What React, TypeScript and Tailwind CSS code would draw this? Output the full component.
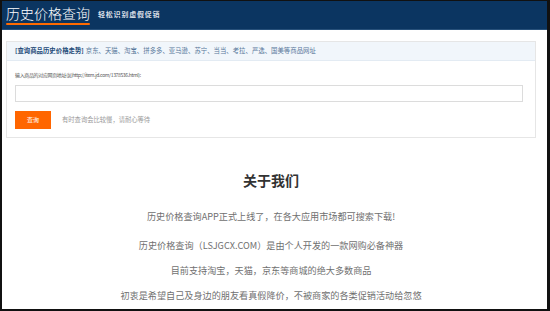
export default function App() {
  const shops = '京东、天猫、淘宝、拼多多、亚马逊、苏宁、当当、考拉、严选、国美等商品网址';
  const lines = [
    '历史价格查询APP正式上线了，在各大应用市场都可搜索下载!',
    '历史价格查询（LSJGCX.COM）是由个人开发的一款网购必备神器',
    '目前支持淘宝，天猫，京东等商城的绝大多数商品',
    '初衷是希望自己及身边的朋友看真假降价，不被商家的各类促销活动给忽悠',
  ];

  return (
    <div className="w-[550px] h-[311px] bg-[#111] pt-px pl-[2px] pr-[3px] pb-[2px] overflow-hidden">
      <div
        className="h-full bg-white flex flex-col overflow-hidden"
        style={{ fontFamily: '"Noto Sans CJK SC", "Noto Sans", sans-serif' }}
      >
        {/* Header */}
        <header className="h-[29px] shrink-0 bg-[#0b3561] border-b border-[#27507a] flex items-start pl-[4px]">
          <div className="pt-[4px] flex flex-col">
            <span className="text-[14px] leading-[17px] text-white font-light">历史价格查询</span>
            <div className="h-[2px] w-[84px] bg-[#ff6a00] mt-[1px] rounded-full" />
          </div>
          <span className="ml-[8px] mt-[9px] text-[7px] leading-[9px] font-bold text-[#d8dee6] tracking-[0.8px]">
            轻松识别虚假促销
          </span>
        </header>

        {/* Query card */}
        <section className="mt-[11px] ml-[4px] w-[530px] border border-[#e6e6e6] bg-white">
          <div className="h-[19px] bg-[#f1f6fb] border-b border-[#e3ebf3] flex items-center pl-[8px] text-[6.4px] leading-none">
            <span className="font-bold text-[#1d4a78]">[查询商品历史价格走势]</span>
            <span className="ml-[2px] text-[#58779a]">{shops}</span>
          </div>
          <div className="pl-[8px] pt-[11px] pb-[8px]">
            <p className="text-[5px] leading-[6px] text-[#555] tracking-[-0.35px]">
              输入商品的对应网页地址(如http://item.jd.com/1378536.html):
            </p>
            <div className="mt-[7px] w-[508px] h-[17px] border border-[#dcdcdc] bg-white" />
            <div className="mt-[9px] flex items-center">
              <button className="w-[36px] h-[18px] bg-[#ff6600] text-white text-[6px] leading-none">查询</button>
              <span className="ml-[11px] text-[6.3px] text-[#9a9a9a]">有时查询会比较慢，请耐心等待</span>
            </div>
          </div>
        </section>

        {/* About */}
        <section className="ml-[4px] w-[530px] text-center">
          <h2 className="mt-[34px] text-[14px] leading-[16px] font-bold text-[#333]">关于我们</h2>
          <div className="mt-[22px] text-[9.15px] text-[#707070]">
            {lines.map((line, i) => (
              <p key={i} className={`leading-[12px] ${i === 0 ? '' : i === 1 ? 'mt-[17px]' : 'mt-[13px]'}`}>
                {line}
              </p>
            ))}
          </div>
        </section>
      </div>
    </div>
  );
}
